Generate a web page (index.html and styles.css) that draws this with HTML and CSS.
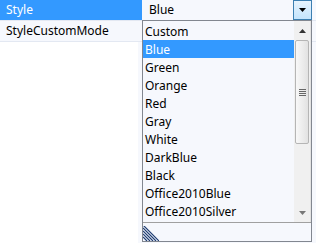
FILE: index.html
```html
<!DOCTYPE html>
<html>
<head>
<meta charset="utf-8">
<link rel="stylesheet" href="styles.css">
</head>
<body>
<div class="page">
  <div class="grid">
    <div class="row">
      <div class="label selected">Style</div>
      <div class="value">
        <span class="value-text">Blue</span>
        <span class="drop-btn"><svg width="8" height="4" viewBox="0 0 8 4"><path d="M0 0H7L3.5 4Z" fill="#000"/></svg></span>
      </div>
    </div>
    <div class="row">
      <div class="label">StyleCustomMode</div>
      <div class="value"></div>
    </div>
  </div>
  <div class="blank"></div>

  <div class="popup">
    <div class="popup-body">
      <ul class="items">
        <li>Custom</li>
        <li class="active">Blue</li>
        <li>Green</li>
        <li>Orange</li>
        <li>Red</li>
        <li>Gray</li>
        <li>White</li>
        <li>DarkBlue</li>
        <li>Black</li>
        <li>Office2010Blue</li>
        <li>Office2010Silver</li>
      </ul>
      <div class="scrollbar">
        <div class="sb-btn"><svg width="7" height="4" viewBox="0 0 7 4"><path d="M3.5 0L7 4H0Z" fill="#333"/></svg></div>
        <div class="thumb">
          <svg width="7" height="7" viewBox="0 0 7 7"><path d="M0 0.5H7M0 2.5H7M0 4.5H7M0 6.5H7" stroke="#666" stroke-width="1"/></svg>
        </div>
        <div class="track"></div>
        <div class="sb-btn"><svg width="7" height="4" viewBox="0 0 7 4"><path d="M0 0H7L3.5 4Z" fill="#777"/></svg></div>
      </div>
    </div>
    <div class="popup-foot">
      <svg class="grip" width="16" height="15" viewBox="0 0 16 15">
        <path d="M0 2L13 15M0 5L10 15M0 8L7 15M0 11L4 15M0 -1L16 15" stroke="#1f3d73" stroke-width="1.2" fill="none"/>
      </svg>
    </div>
  </div>
</div>
</body>
</html>
```
FILE: styles.css
```css
* { box-sizing: border-box; }
html, body {
  margin: 0;
  padding: 0;
}
body {
  width: 316px;
  height: 243px;
  overflow: hidden;
  background: #f6f8fd;
  font-family: "Noto Sans", "Liberation Sans", sans-serif;
  font-size: 12px;
  color: #000;
}
.page {
  position: relative;
  width: 316px;
  height: 243px;
}
.grid {
  display: flex;
  flex-direction: column;
}
.row {
  display: flex;
  height: 21px;
  border-bottom: 1px solid #e3e8f2;
}
.label {
  width: 142px;
  padding-left: 6px;
  line-height: 20px;
  white-space: nowrap;
}
.label.selected {
  background: #3399ff;
  color: #fff;
}
.value {
  flex: 1;
  display: flex;
  align-items: center;
  justify-content: space-between;
  padding-left: 7px;
  padding-right: 4px;
  height: 20px;
}
.value-text { line-height: 20px; }
.drop-btn {
  width: 19px;
  height: 20px;
  border: 1px solid #3c7fb1;
  background: linear-gradient(#e6f3fd, #c4e4fc);
  display: flex;
  align-items: center;
  justify-content: center;
}
.blank {
  width: 138px;
  height: 201px;
  background: #fff;
}
.popup {
  position: absolute;
  left: 142px;
  top: 20px;
  width: 170px;
  height: 222px;
  border: 1px solid #828790;
  background: #f6f8fd;
  display: flex;
  flex-direction: column;
}
.popup-body {
  display: flex;
  height: 202px;
  border-bottom: 1px solid #a0a0a0;
}
.items {
  list-style: none;
  margin: 0;
  padding: 1px 0 0 0;
  flex: 1;
}
.items li {
  height: 18px;
  line-height: 19px;
  padding-left: 2px;
  white-space: nowrap;
}
.items li.active {
  background: #3399ff;
  color: #fff;
}
.scrollbar {
  width: 17px;
  display: flex;
  flex-direction: column;
  background: #f0f0f0;
  border-right: 1px solid #e2e2e2;
}
.sb-btn {
  height: 19px;
  display: flex;
  align-items: center;
  justify-content: center;
}
.thumb {
  height: 104px;
  margin: 0 1px;
  border: 1px solid #b5b5b5;
  border-radius: 2px;
  background: linear-gradient(90deg, #f8f8f8, #e2e2e2);
  display: flex;
  align-items: center;
  justify-content: center;
}
.track { flex: 1; }
.popup-foot {
  flex: 1;
  position: relative;
}
.grip {
  position: absolute;
  left: 0;
  bottom: 0;
}
```
